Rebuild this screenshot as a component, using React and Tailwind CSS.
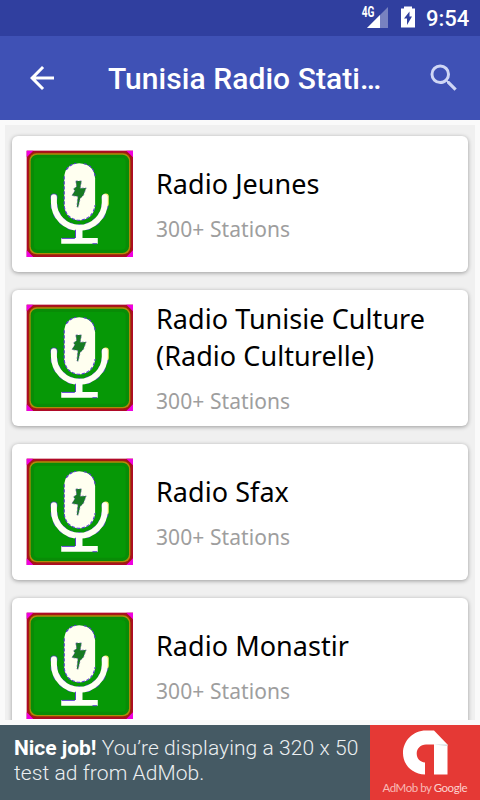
const stations = [
  { id: 1, name: "Radio Jeunes", count: "300+ Stations" },
  { id: 2, name: "Radio Tunisie Culture (Radio Culturelle)", count: "300+ Stations" },
  { id: 3, name: "Radio Sfax", count: "300+ Stations" },
  { id: 4, name: "Radio Monastir", count: "300+ Stations" },
];

// green tile with a microphone and a small bolt
function MicIcon() {
  return (
    <svg viewBox="18 18 322 322" className="w-[107px] h-[107px] shrink-0">
      <rect x="20" y="20" width="320" height="320" fill="#b00a28" />
      <path d="M20 20h20l-20 20zM340 20v20l-20-20zM20 340v-20l20 20zM340 340h-20l20-20z" fill="#f000e0" />
      <rect x="24" y="24" width="312" height="312" rx="24" fill="#a01c10" />
      <rect x="28" y="28" width="304" height="304" rx="22" fill="#b08a08" />
      <rect x="32" y="32" width="296" height="296" rx="20" fill="#088c06" />
      <rect x="42" y="42" width="276" height="276" rx="12" fill="#069806" />
      <g fill="none" strokeLinecap="round">
        <path d="M102 160v16c0 42 34 76 76 76s78-34 78-76v-16" stroke="#4a4ab0" strokeWidth="22" strokeDasharray="1 26" />
        <path d="M258 158v22" stroke="#f4f060" strokeWidth="18" />
        <path d="M102 160v16c0 42 34 76 76 76s77-34 77-76v-16" stroke="#fffff4" strokeWidth="18" />
      </g>
      <path d="M133 104q0-44 45-46q45 2 48 46v80q-3 42-48 46q-42-4-45-46z" fill="#fffff0" />
      <path d="M133 97v90q5 38 45 43q42-5 48-46M226 97q-5-34-36-38M139 78q13-18 30-20" fill="none" stroke="#5a3fd0" strokeWidth="3.500" strokeDasharray="10 5" />
      <path d="M168 248h20v35h46v17H124v-17h44z" fill="#fffff8" />
      <path d="M167 258v24M125 284h40M232 300h-14" stroke="#5a3fd0" strokeWidth="3" />
      <path d="M168 111h17l-4 22 18-1-8 22-10 10-6 26-4-1 3-31-18-3 9-14-4-6 9-7z" fill="#167a22" stroke="#6b5cb0" strokeWidth="2" strokeDasharray="6 5" />
    </svg>
  );
}

function StatusBar() {
  return (
    <div className="h-9 bg-[#303f9f] flex items-center text-white">
      <svg viewBox="0 0 64 36" className="w-16 h-9 ml-[358px] shrink-0">
        <path d="M30 7v21H9z" fill="#fff" fillOpacity=".35" />
        <path d="M22 15v13H9z" fill="#fff" />
        <path d="M0 5h17v12.500H0z" fill="#303f9f" />
        <g transform="translate(3.7 17) scale(.7 1)">
          <text fill="#fff" fontSize="14.500" fontWeight="700" fontFamily="Roboto, sans-serif">4G</text>
        </g>
        <path d="M46 6.500h8V8.500h3V27.500H43V8.500h3z" fill="#fff" />
        <path d="M51.500 11.500v5h2.500l-5 8.500v-6.500H46z" fill="#303f9f" />
      </svg>
      <span className="ml-1 font-['Roboto',sans-serif] font-medium text-[22px] leading-9 pt-0.5">9:54</span>
    </div>
  );
}

function AppBar() {
  return (
    <div className="h-[84px] bg-[#3f51b5] flex items-center text-white">
      <svg viewBox="0 0 24 24" className="w-9 h-9 ml-6 shrink-0" fill="currentColor">
        <path d="M20 11H7.830l5.590-5.590L12 4l-8 8 8 8 1.410-1.410L7.830 13H20v-2z" />
      </svg>
      <h1 className="ml-12 w-[276px] pt-px font-['Roboto',sans-serif] font-medium text-[30px] leading-10 tracking-[0.06px] whitespace-nowrap">
        Tunisia Radio Stati…
      </h1>
      <svg viewBox="0 0 24 24" className="w-9 h-9 ml-[42px] shrink-0" fill="#cfd6f5">
        <path d="M15.500 14h-.790l-.280-.270A6.471 6.471 0 0 0 16 9.500 6.500 6.500 0 1 0 9.500 16c1.610 0 3.090-.590 4.230-1.570l.270.280v.790l5 4.990L20.490 19l-4.990-5zm-6 0C7.010 14 5 11.990 5 9.500S7.010 5 9.500 5 14 7.010 14 9.500 11.990 14 9.500 14z" />
      </svg>
    </div>
  );
}

function StationCard({ station }) {
  return (
    <div className="h-[136px] shrink-0 bg-white rounded-md shadow-[0_1px_4px_rgba(0,0,0,0.36)] flex items-center pl-3.5 pr-5 pb-px">
      <MicIcon />
      <div className="ml-[23px] mt-px flex-1 font-['Noto_Sans',sans-serif]">
        <h2 className="text-[27px] leading-[37px] tracking-[0.05px] text-black">{station.name}</h2>
        <p className="mt-[13px] text-[21px] leading-[29px] tracking-[0.08px] text-[#9e9e9e]">{station.count}</p>
      </div>
    </div>
  );
}

function AdBanner() {
  return (
    <div className="h-[75px] flex bg-[#455a64] font-['Roboto',sans-serif]">
      <p className="w-[370px] pl-3.5 pt-[11px] text-[21px] leading-[25px] tracking-[0.08px] font-light text-[#eceff1] whitespace-nowrap">
        <b className="font-bold text-white tracking-[-0.02px]">Nice job!</b> You’re displaying a 320 x 50
        <br />
        test ad from AdMob.
      </p>
      <div className="w-[110px] bg-[#e53935]">
        <svg viewBox="0 0 110 75" className="w-[110px] h-[75px]">
          <path d="M55 49.500C42 49 33 40 33 28S43 5.500 56 5.500h8l13.500 14V49.500H64V19.500h-8c-5.500 0-9.300 4-9.300 9s3.300 8.500 8.300 9z" fill="#fff" />
          <path d="M64 19.500h13.500v1.500z" fill="#cfd8dc" />
          <text x="12.500" y="67" fill="#f9b9b6" fontSize="11.500" textLength="85" fontFamily="Lato, sans-serif">
            AdMob by <tspan fill="#fcd0ce">Google</tspan>
          </text>
        </svg>
      </div>
    </div>
  );
}

export default function App() {
  return (
    <div className="w-[480px] h-[800px] overflow-hidden flex flex-col bg-[#fafafa]">
      <StatusBar />
      <AppBar />

      {/* station list */}
      <div className="mx-[5px] mt-[5px] mb-[5px] h-[595px] overflow-hidden bg-[#f0f0f0] px-[7px] pt-[11px] flex flex-col gap-[18px]">
        {stations.map((station) => (
          <StationCard key={station.id} station={station} />
        ))}
      </div>

      <AdBanner />
    </div>
  );
}
